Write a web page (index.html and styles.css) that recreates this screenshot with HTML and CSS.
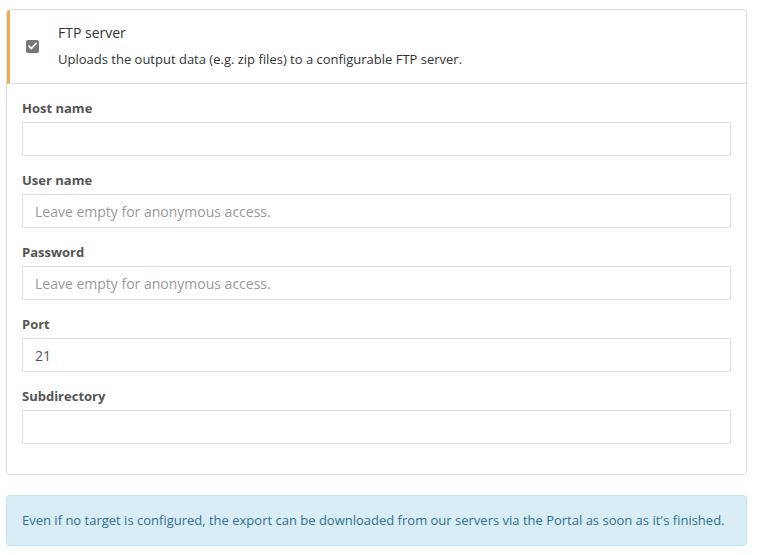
FILE: index.html
```html
<!DOCTYPE html>
<html>
<head>
<meta charset="utf-8">
<link rel="stylesheet" href="styles.css">
</head>
<body>
<div class="page">
  <div class="card">
    <div class="card-head">
      <span class="check">
        <svg width="9" height="8" viewBox="0 0 9 8"><path d="M1 4.2 L3.4 6.5 L8 1.5" fill="none" stroke="#fff" stroke-width="1.8" stroke-linecap="round" stroke-linejoin="round"/></svg>
      </span>
      <div class="head-text">
        <div class="title">FTP server</div>
        <div class="desc">Uploads the output data (e.g. zip files) to a configurable FTP server.</div>
      </div>
    </div>
    <div class="card-body">
      <div class="group">
        <label class="label">Host name</label>
        <div class="input"></div>
      </div>
      <div class="group">
        <label class="label">User name</label>
        <div class="input placeholder">Leave empty for anonymous access.</div>
      </div>
      <div class="group">
        <label class="label">Password</label>
        <div class="input placeholder">Leave empty for anonymous access.</div>
      </div>
      <div class="group">
        <label class="label">Port</label>
        <div class="input">21</div>
      </div>
      <div class="group">
        <label class="label">Subdirectory</label>
        <div class="input"></div>
      </div>
    </div>
  </div>
  <div class="alert">Even if no target is configured, the export can be downloaded from our servers via the Portal as soon as it's finished.</div>
</div>
</body>
</html>
```
FILE: styles.css
```css
* { box-sizing: border-box; }
body {
  margin: 0;
  font-family: "Open Sans", sans-serif;
  font-size: 13px;
  color: #333;
  background: #fff;
}
.page {
  padding: 9px 10px 0 6px;
}
.card {
  border: 1px solid #ddd;
  border-radius: 4px;
}
.card-head {
  display: flex;
  align-items: center;
  border-left: 3px solid #f0ad4e;
  border-bottom: 1px solid #ddd;
  padding: 13px 16px 14px 16px;
  border-top-left-radius: 3px;
}
.check {
  width: 13px;
  height: 13px;
  border-radius: 2px;
  background: #777;
  display: flex;
  align-items: center;
  justify-content: center;
  margin-right: 19px;
  flex: none;
}
.title {
  font-size: 14px;
  line-height: 20px;
  color: #333;
}
.desc {
  margin-top: 6px;
  line-height: 20px;
  color: #333;
}
.card-body {
  padding: 15px 15px 15px 15px;
}
.group {
  margin-bottom: 15px;
}
.label {
  display: block;
  font-weight: 700;
  line-height: 18px;
  color: #555;
  margin-bottom: 5px;
}
.input {
  height: 34px;
  border: 1px solid #e2e2e2;
  padding: 0 12px;
  font-size: 14px;
  line-height: 33px;
  color: #555;
}
.placeholder { color: #999; }
.alert {
  margin-top: 20px;
  background: #d9edf7;
  border: 1px solid #bce8f1;
  border-radius: 4px;
  color: #31708f;
  padding: 15px;
  line-height: 19px;
}
```
